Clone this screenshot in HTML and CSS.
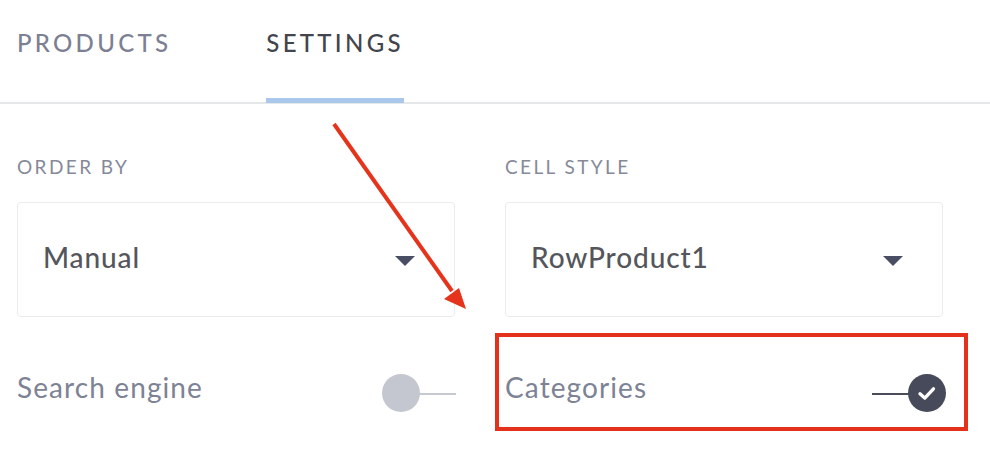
FILE: index.html
```html
<!DOCTYPE html>
<html>
<head>
<meta charset="utf-8">
<link rel="stylesheet" href="styles.css">
</head>
<body>
<div class="page">
  <nav class="tabs">
    <div class="tab">PRODUCTS</div>
    <div class="tab active">SETTINGS</div>
  </nav>
  <main class="settings">
    <section class="field">
      <div class="label">ORDER BY</div>
      <div class="select"><span>Manual</span><i class="caret"></i></div>
    </section>
    <section class="field">
      <div class="label">CELL STYLE</div>
      <div class="select"><span>RowProduct1</span><i class="caret"></i></div>
    </section>
    <div class="toggle-row">
      <span class="toggle-label">Search engine</span>
      <span class="toggle off"><span class="track"></span><span class="knob"></span></span>
    </div>
    <div class="toggle-row">
      <span class="toggle-label">Categories</span>
      <span class="toggle on"><span class="track"></span><span class="knob"><svg viewBox="0 0 20 20" width="28" height="28"><path d="M5 10.6 L8.4 13.6 L14.6 7" fill="none" stroke="#fff" stroke-width="2.4" stroke-linecap="round" stroke-linejoin="round"/></svg></span></span>
    </div>
  </main>
  <div class="highlight"></div>
  <svg class="arrow" width="990" height="464" viewBox="0 0 990 464">
    <line x1="334" y1="124" x2="452" y2="291" stroke="#e5341b" stroke-width="4"/>
    <polygon points="466,309 444,299 459,288" fill="#e5341b"/>
  </svg>
</div>
</body>
</html>
```

FILE: styles.css
```css
html, body {
  margin: 0;
  padding: 0;
  background: #ffffff;
}
body {
  font-family: "Lato", "Open Sans", sans-serif;
}
.page {
  position: relative;
  width: 990px;
  height: 464px;
  overflow: hidden;
}
.tabs {
  display: flex;
  align-items: flex-start;
  gap: 95px;
  height: 102px;
  padding-left: 17px;
  border-bottom: 2px solid #e6e7e9;
}
.tab {
  box-sizing: border-box;
  height: 103px;
  padding-top: 29px;
  font-size: 24px;
  line-height: 28px;
  font-weight: 500;
  letter-spacing: 3.3px;
  color: #7c8092;
}
.tab.active {
  color: #43454d;
  border-bottom: 5px solid #a9c8eb;
}
.settings {
  display: grid;
  grid-template-columns: 438px 438px;
  column-gap: 50px;
  padding-left: 17px;
  padding-top: 51px;
}
.label {
  font-size: 19px;
  line-height: 24px;
  letter-spacing: 2.4px;
  color: #868a98;
}
.select {
  box-sizing: border-box;
  margin-top: 23px;
  height: 115px;
  border: 1px solid #ececee;
  border-radius: 4px;
  display: flex;
  align-items: center;
  justify-content: space-between;
  padding: 0 39px 0 25px;
  font-size: 28px;
  letter-spacing: 0.9px;
  color: #55565c;
  font-weight: 500;
}
.select span {
  margin-top: -5px;
}
.caret {
  width: 0;
  height: 0;
  border-left: 10px solid transparent;
  border-right: 10px solid transparent;
  border-top: 10px solid #4a4e64;
  margin-top: 2px;
}
.toggle-row {
  margin-top: 56px;
  height: 40px;
  display: flex;
  align-items: center;
  justify-content: space-between;
}
.toggle-label {
  font-size: 28px;
  letter-spacing: 1.1px;
  color: #7d8294;
  margin-top: -12px;
}
.toggle {
  position: relative;
  width: 74px;
  height: 38px;
  display: flex;
  align-items: center;
}
.toggle.off { margin-right: -1px; }
.toggle.on { margin-right: -3px; }
.track {
  position: absolute;
  top: 19px;
  height: 2px;
}
.toggle.off .track {
  left: 36px;
  right: 0;
  background: #c6c9d1;
}
.toggle.on .track {
  left: 0;
  right: 36px;
  background: #4a4c5a;
}
.knob {
  position: absolute;
  top: 0;
  width: 38px;
  height: 38px;
  border-radius: 50%;
  display: flex;
  align-items: center;
  justify-content: center;
}
.toggle.off .knob {
  left: 0;
  background: #c4c7cf;
}
.toggle.on .knob {
  right: 0;
  background: #474a5b;
}
.highlight {
  position: absolute;
  left: 495px;
  top: 333px;
  width: 465px;
  height: 90px;
  border: 4px solid #e3311c;
}
.arrow {
  position: absolute;
  left: 0;
  top: 0;
}
```
